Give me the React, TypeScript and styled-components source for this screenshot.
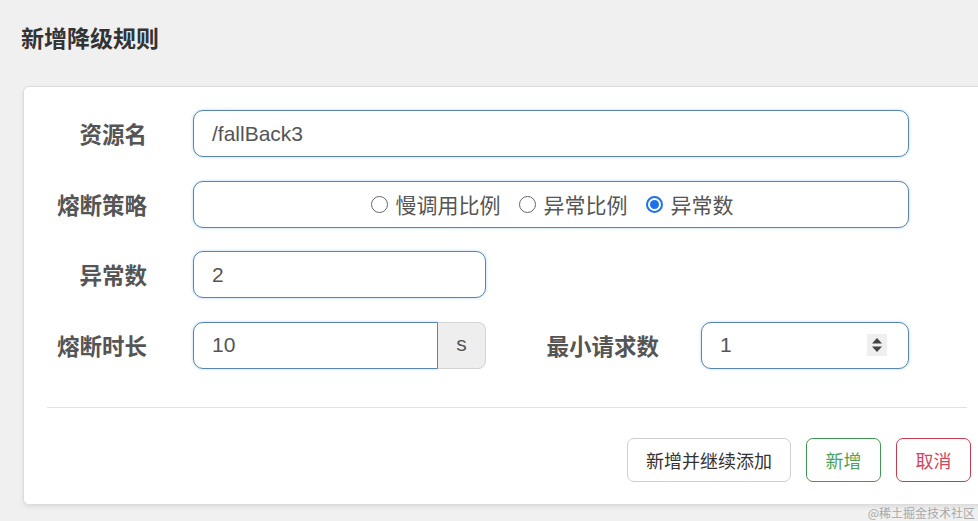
import React from "react";
import styled, { createGlobalStyle, css } from "styled-components";

const GlobalStyle = createGlobalStyle`
  html, body {
    margin: 0;
    padding: 0;
    background: #f0f0f0;
    overflow: hidden;
  }
  body {
    font-family: "Liberation Sans", "Noto Sans CJK SC", sans-serif;
    color: #555;
  }
  * { box-sizing: border-box; }
`;

const Page = styled.div`
  width: 978px;
  height: 521px;
  overflow: hidden;
`;

const Header = styled.div`
  height: 86px;
  padding: 22px 0 0 21px;
`;

const Title = styled.h4`
  margin: 0;
  font-family: "Noto Sans CJK SC", sans-serif;
  font-size: 23px;
  line-height: 30px;
  font-weight: 700;
  color: #333;
`;

const Card = styled.div`
  margin-left: 23px;
  width: 968px;
  height: 419px;
  background: #fff;
  border: 1px solid #dcdcdc;
  border-radius: 6px;
  box-shadow: 0 2px 4px rgba(0, 0, 0, 0.08);
  padding: 23px 0 0;
`;

const Form = styled.div`
  display: flex;
  flex-direction: column;
  gap: 23.5px;
`;

const Row = styled.div`
  display: flex;
  align-items: center;
  height: 47px;
`;

const Label = styled.label<{ $width: number; $gap: number }>`
  width: ${(p) => p.$width}px;
  margin-right: ${(p) => p.$gap}px;
  text-align: right;
  font-family: "Noto Sans CJK SC", sans-serif;
  font-size: 22.5px;
  font-weight: 700;
  color: #555;
  line-height: 47px;
`;

const fieldBox = css`
  height: 47px;
  border: 1.5px solid #5a86ab;
  border-radius: 10px;
  box-shadow: 0 0 3px rgba(102, 175, 233, 0.55);
  background: #fff;
`;

const TextField = styled.div<{ $width: number }>`
  ${fieldBox};
  width: ${(p) => p.$width}px;
  display: flex;
  align-items: center;
  padding: 0 18px;
  font-size: 21px;
  color: #555;
`;

const RadioBox = styled.div`
  ${fieldBox};
  width: 716px;
  display: flex;
  align-items: center;
  justify-content: center;
  gap: 18px;
  padding-left: 2px;
`;

const RadioItem = styled.span`
  display: inline-flex;
  align-items: center;
  gap: 8px;
  font-family: "Noto Sans CJK SC", sans-serif;
  font-size: 21px;
  color: #555;
`;

const RadioDot = styled.span<{ $checked?: boolean }>`
  width: 17px;
  height: 17px;
  border-radius: 50%;
  display: inline-flex;
  align-items: center;
  justify-content: center;
  border: ${(p) => (p.$checked ? "2px solid #1a73e8" : "1.5px solid #666")};
  background: #fff;
  &::after {
    content: "";
    width: 9px;
    height: 9px;
    border-radius: 50%;
    background: ${(p) => (p.$checked ? "#1a73e8" : "transparent")};
  }
`;

const InputGroup = styled.div`
  display: flex;
  width: 293px;
  height: 47px;
`;

const GroupInput = styled.div`
  ${fieldBox};
  flex: 1;
  border-radius: 10px 0 0 10px;
  display: flex;
  align-items: center;
  padding: 0 18px;
  font-size: 21px;
  color: #555;
`;

const Addon = styled.span`
  width: 48px;
  height: 47px;
  display: flex;
  align-items: center;
  justify-content: center;
  background: #eeeeee;
  border: 1px solid #d4d4d4;
  border-left: none;
  border-radius: 0 8px 8px 0;
  font-size: 21px;
  color: #555;
  padding-bottom: 2px;
`;

const NumberField = styled(TextField)`
  justify-content: space-between;
  padding-right: 21px;
`;

const Spinner = styled.span`
  width: 20px;
  height: 22px;
  background: #efefef;
  display: flex;
  align-items: center;
  justify-content: center;
`;

const Divider = styled.div`
  margin: 38px 23px 0;
  border-top: 1px solid #e3e3e3;
`;

const Actions = styled.div`
  display: flex;
  justify-content: flex-end;
  gap: 15px;
  margin-top: 30px;
  padding-right: 19px;
`;

const tones = {
  plain: { border: "#cfcfcf", color: "#333" },
  success: { border: "#3f9752", color: "#4aa35a" },
  danger: { border: "#c53b50", color: "#d2475c" },
};

const Button = styled.button<{ $tone: keyof typeof tones; $width: number }>`
  width: ${(p) => p.$width}px;
  height: 44px;
  background: #fff;
  border: 1.5px solid ${(p) => tones[p.$tone].border};
  color: ${(p) => tones[p.$tone].color};
  border-radius: 7px;
  font-family: "Noto Sans CJK SC", sans-serif;
  font-size: 18px;
  padding: 0;
  cursor: pointer;
`;

const Watermark = styled.div`
  display: flex;
  justify-content: flex-end;
  margin-top: 1px;
  padding-right: 3px;
  font-family: "Noto Sans CJK SC", sans-serif;
  font-size: 12px;
  line-height: 14px;
  color: #a8a8a8;
  white-space: nowrap;
`;

const SpinArrows = () => (
  <svg width="12" height="18" viewBox="0 0 12 18">
    <path d="M6 2 L11 7.5 H1 Z" fill="#444" />
    <path d="M6 16 L11 10.5 H1 Z" fill="#444" />
  </svg>
);

export default function App() {
  return (
    <Page>
      <GlobalStyle />
      <Header>
        <Title>新增降级规则</Title>
      </Header>
      <Card>
        <Form>
          <Row>
            <Label $width={123} $gap={46}>资源名</Label>
            <TextField $width={716}>/fallBack3</TextField>
          </Row>
          <Row>
            <Label $width={123} $gap={46}>熔断策略</Label>
            <RadioBox>
              <RadioItem>
                <RadioDot />
                慢调用比例
              </RadioItem>
              <RadioItem>
                <RadioDot />
                异常比例
              </RadioItem>
              <RadioItem>
                <RadioDot $checked />
                异常数
              </RadioItem>
            </RadioBox>
          </Row>
          <Row>
            <Label $width={123} $gap={46}>异常数</Label>
            <TextField $width={293}>2</TextField>
          </Row>
          <Row>
            <Label $width={123} $gap={46}>熔断时长</Label>
            <InputGroup>
              <GroupInput>10</GroupInput>
              <Addon>s</Addon>
            </InputGroup>
            <Label $width={173} $gap={42}>最小请求数</Label>
            <NumberField $width={208}>
              1
              <Spinner>
                <SpinArrows />
              </Spinner>
            </NumberField>
          </Row>
        </Form>
        <Divider />
        <Actions>
          <Button $tone="plain" $width={164}>新增并继续添加</Button>
          <Button $tone="success" $width={75}>新增</Button>
          <Button $tone="danger" $width={75}>取消</Button>
        </Actions>
      </Card>
      <Watermark>@稀土掘金技术社区</Watermark>
    </Page>
  );
}
